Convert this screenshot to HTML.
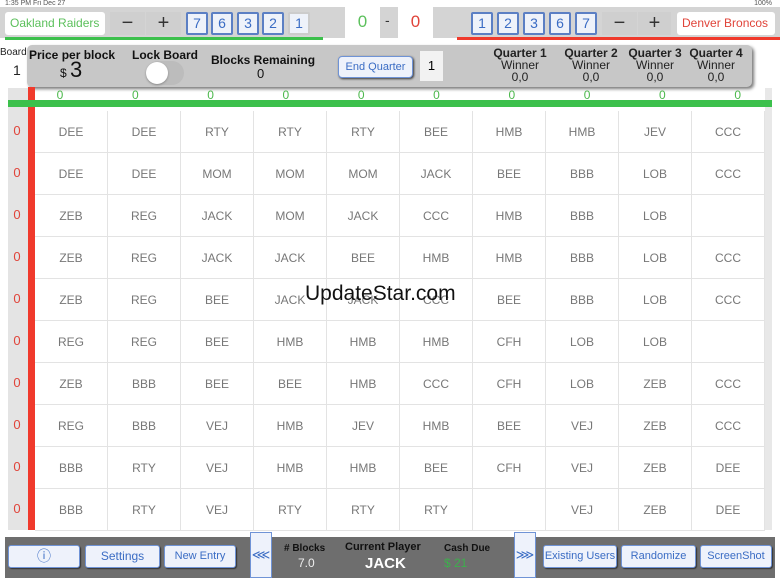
<!DOCTYPE html>
<html><head><meta charset="utf-8"><style>
*{box-sizing:border-box;margin:0;padding:0}
body{width:780px;height:585px;overflow:hidden;background:#fff;font-family:"Liberation Sans",sans-serif;position:relative}
.abs{position:absolute}
.topbar{left:0;top:7px;width:780px;height:31px;background:#d4d4d4}
.team{top:12px;height:23px;background:#fff;border-radius:3px;font-size:12px;line-height:23px;padding-left:5px}
.pm{top:12px;height:23px;background:#cfcfcf;font-size:20px;line-height:22px;color:#333;text-align:center}
.nb{top:12px;width:22px;height:23px;background:#eef2fa;border:2px solid #5b7fc4;border-radius:2px;color:#3a6cc4;font-size:14px;line-height:19px;text-align:center}
.score{top:0;width:35px;height:42px;background:#fff;font-size:17px;line-height:44px;text-align:center}
.panel{left:27px;top:45px;width:725px;height:42px;background:#c7c7c7;border-radius:5px;box-shadow:2px 2px 3px #777}
.b{font-weight:bold;font-size:12px;color:#111}
.q{text-align:center;font-size:12px;line-height:12px;color:#222;width:70px}
.cell{position:absolute;width:73px;height:42px;border-right:1px solid #e3e3e3;border-bottom:1px solid #e3e3e3;text-align:center;line-height:42px;font-size:12px;color:#777}
.gz{position:absolute;top:88px;font-size:12px;color:#4cb84c;width:20px;text-align:center}
.rz{position:absolute;left:8px;width:18px;font-size:13px;color:#e0443a;text-align:center}
.bot{left:5px;top:537px;width:770px;height:41px;background:#6e6e6e}
.btn{top:545px;height:23px;background:#eef2fb;border:1px solid #6f93d6;border-radius:3px;font-size:11px;color:#3a6cc4;text-align:center;line-height:21px;box-shadow:1px 1px 1px #333}
.arr{top:532px;width:22px;height:46px;background:#eef2fb;border:1px solid #6f93d6;color:#3a6cc4;font-size:13px;text-align:center;line-height:44px}
</style></head><body>
<div class="abs" style="left:5px;top:0;font-size:7px;color:#555">1:35 PM  Fri Dec 27</div>
<div class="abs" style="right:8px;top:0;font-size:7px;color:#555">100%</div>
<div class="abs topbar"></div>
<div class="abs team" style="left:5px;width:100px;color:#5cc05c">Oakland Raiders</div>
<div class="abs pm" style="left:110px;width:35px">−</div>
<div class="abs pm" style="left:146px;width:35px">+</div>
<div class="abs nb" style="left:186px">7</div>
<div class="abs nb" style="left:211px">6</div>
<div class="abs nb" style="left:237px">3</div>
<div class="abs nb" style="left:262px">2</div>
<div class="abs nb" style="left:288px;border-color:#ccc;background:#eef2fa">1</div>
<div class="abs" style="left:5px;top:37px;width:318px;height:3px;background:#3cc04c"></div>
<div class="abs score" style="left:345px;color:#5cc05c">0</div>
<div class="abs" style="left:385px;top:12px;font-size:14px;color:#333">-</div>
<div class="abs score" style="left:398px;color:#e0443a">0</div>
<div class="abs" style="left:457px;top:37px;width:323px;height:3px;background:#f03a2c"></div>
<div class="abs nb" style="left:471px">1</div>
<div class="abs nb" style="left:497px">2</div>
<div class="abs nb" style="left:523px">3</div>
<div class="abs nb" style="left:549px">6</div>
<div class="abs nb" style="left:575px">7</div>
<div class="abs pm" style="left:602px;width:35px">−</div>
<div class="abs pm" style="left:638px;width:33px">+</div>
<div class="abs team" style="left:677px;width:98px;color:#e0443a">Denver Broncos</div>

<div class="abs" style="left:0;top:47px;font-size:10px;color:#222">Board</div>
<div class="abs" style="left:13px;top:62px;font-size:14px;color:#222">1</div>
<div class="abs panel"></div>
<div class="abs b" style="left:29px;top:48px">Price per block</div>
<div class="abs" style="left:60px;top:57px;font-size:12px;color:#111">$ <span style="font-size:22px">3</span></div>
<div class="abs b" style="left:132px;top:48px">Lock Board</div>
<div class="abs" style="left:146px;top:61px;width:38px;height:24px;border-radius:12px;background:#bcbcbc"></div>
<div class="abs" style="left:146px;top:62px;width:22px;height:22px;border-radius:11px;background:#fff;box-shadow:0 1px 2px #888"></div>
<div class="abs b" style="left:211px;top:53px">Blocks Remaining</div>
<div class="abs" style="left:257px;top:66px;font-size:13px;color:#111">0</div>
<div class="abs" style="left:338px;top:56px;width:75px;height:22px;background:#eef2fb;border:1px solid #6f93d6;border-radius:4px;font-size:11px;color:#3a6cc4;text-align:center;line-height:20px;box-shadow:1px 1px 2px #333">End Quarter</div>
<div class="abs" style="left:420px;top:51px;width:23px;height:30px;background:#f2f2f2;font-size:13px;line-height:30px;text-align:center">1</div>
<div class="abs q" style="left:485px;top:47px"><b>Quarter 1</b><br>Winner<br>0,0</div>
<div class="abs q" style="left:556px;top:47px"><b>Quarter 2</b><br>Winner<br>0,0</div>
<div class="abs q" style="left:620px;top:47px"><b>Quarter 3</b><br>Winner<br>0,0</div>
<div class="abs q" style="left:681px;top:47px"><b>Quarter 4</b><br>Winner<br>0,0</div>

<div class="abs" style="left:8px;top:88px;width:20px;height:442px;background:#e4e4e4"></div>
<div class="abs" style="left:765px;top:88px;width:7px;height:442px;background:#e8e8e8"></div>
<div class="abs" style="left:28px;top:87px;width:7px;height:443px;background:#f03a2c"></div>
<div class="abs" style="left:8px;top:100px;width:764px;height:7px;background:#3cc04c"></div>
<div id="g"></div>
<div class="abs" style="left:305px;top:282px;font-size:21px;color:#111">UpdateStar.com</div>

<div class="abs bot"></div>
<div class="abs btn" style="left:8px;width:72px;font-size:14px">ⓘ</div>
<div class="abs btn" style="left:85px;width:75px;font-size:12px">Settings</div>
<div class="abs btn" style="left:164px;width:72px">New Entry</div>
<div class="abs arr" style="left:250px">⋘</div>
<div class="abs" style="left:284px;top:543px;font-size:10px;font-weight:bold;color:#111">#&nbsp;Blocks</div>
<div class="abs" style="left:298px;top:556px;font-size:12px;color:#eee">7.0</div>
<div class="abs" style="left:345px;top:541px;font-size:11px;font-weight:bold;color:#111">Current Player</div>
<div class="abs" style="left:365px;top:555px;font-size:15px;font-weight:bold;color:#fff">JACK</div>
<div class="abs" style="left:444px;top:543px;font-size:10px;font-weight:bold;color:#111">Cash Due</div>
<div class="abs" style="left:444px;top:556px;font-size:12px;color:#3cb04c">$ 21</div>
<div class="abs arr" style="left:514px">⋙</div>
<div class="abs btn" style="left:543px;width:74px">Existing Users</div>
<div class="abs btn" style="left:621px;width:75px">Randomize</div>
<div class="abs btn" style="left:700px;width:72px">ScreenShot</div>
<script>
var d=[
"DEE DEE RTY RTY RTY BEE HMB HMB JEV CCC",
"DEE DEE MOM MOM MOM JACK BEE BBB LOB CCC",
"ZEB REG JACK MOM JACK CCC HMB BBB LOB -",
"ZEB REG JACK JACK BEE HMB HMB BBB LOB CCC",
"ZEB REG BEE JACK JACK CCC BEE BBB LOB CCC",
"REG REG BEE HMB HMB HMB CFH LOB LOB -",
"ZEB BBB BEE BEE HMB CCC CFH LOB ZEB CCC",
"REG BBB VEJ HMB JEV HMB BEE VEJ ZEB CCC",
"BBB RTY VEJ HMB HMB BEE CFH VEJ ZEB DEE",
"BBB RTY VEJ RTY RTY RTY - VEJ ZEB DEE"];
var h="";
for(var c=0;c<10;c++)h+='<div class="gz" style="left:'+(50+c*75.3)+'px">0</div>';
for(var r=0;r<10;r++){var w=d[r].split(" ");
h+='<div class="rz" style="top:'+(123+r*42)+'px">0</div>';
for(var c=0;c<10;c++){var t=w[c]=="-"?"":w[c];
h+='<div class="cell" style="left:'+(35+c*73)+'px;top:'+(111+r*42)+'px">'+t+'</div>';}}
document.getElementById("g").innerHTML=h;
</script>
</body></html>
